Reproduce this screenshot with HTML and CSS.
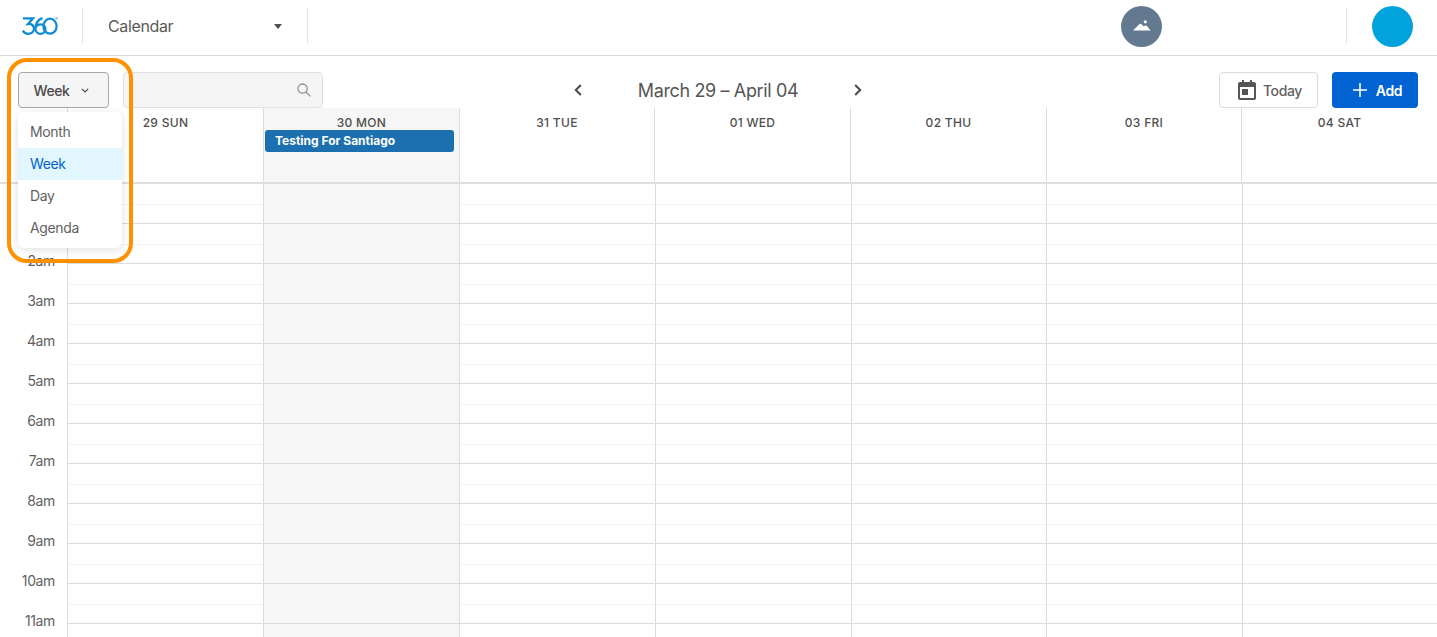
FILE: index.html
```html
<!DOCTYPE html>
<html lang="en">
<head>
<meta charset="utf-8">
<title>Calendar</title>
<link rel="stylesheet" href="styles.css">
</head>
<body>
<div class="app">
  <header class="topbar">
    <div class="logo-cell">
      <svg class="logo" width="36" height="18" viewBox="0 0 36 18" fill="none" stroke="#0f8cd6" stroke-width="2.3">
        <path d="M1 1.3H11L6 7C9.6 6.6 12 8.6 12 11.6C12 14.8 9.4 16.8 6.4 16.8C4 16.8 1.8 15.6 .8 13.6"/>
        <path d="M20.5 1.2C16 2.4 13.4 6.8 13.4 11.2C13.4 14.6 15.6 16.8 18.4 16.8C21.2 16.8 23.4 14.8 23.4 12C23.4 9.2 21.2 7.4 18.6 7.4C16.4 7.4 14.6 8.6 13.8 10.4"/>
        <ellipse cx="28" cy="9.2" rx="6.6" ry="7.5"/>
        <circle cx="34.6" cy="1.4" r=".9" stroke-width=".6"/>
      </svg>
    </div>
    <div class="app-switch">
      <span class="app-name">Calendar</span>
      <span class="caret"></span>
    </div>
    <div class="topbar-fill">
      <span class="avatar avatar-slate">
        <svg width="18" height="12" viewBox="0 0 18 12" fill="#fff"><path d="M0 10.6L6 4.4C7 3.4 7.9 3.6 8.8 4.6L10.8 6.6L11.9 5.8C12.6 5.3 13.2 5.3 13.9 5.9L17.6 10.6Z"/><circle cx="12.3" cy="1.8" r="1.6"/></svg>
      </span>
    </div>
    <div class="user-cell"><span class="avatar avatar-blue"></span></div>
  </header>

  <section class="toolbar">
    <div class="toolbar-left">
      <button class="view-btn" type="button">Week
        <svg width="8" height="5" viewBox="0 0 8 5" fill="none" stroke="#4a4a4a" stroke-width="1.2"><path d="M.8.8L4 4L7.2.8"/></svg>
      </button>
      <div class="search">
        <svg width="14" height="14" viewBox="0 0 14 14" fill="none" stroke="#8f8f8f" stroke-width="1.3"><circle cx="5.6" cy="5.6" r="4.6"/><path d="M9 9L13.4 13.4"/></svg>
      </div>
    </div>
    <div class="range">
      <svg width="8" height="12" viewBox="0 0 8 12" fill="none" stroke="#4a4a4a" stroke-width="2"><path d="M6.8 1L1.8 6L6.8 11"/></svg>
      <span class="range-label">March 29 – April 04</span>
      <svg width="8" height="12" viewBox="0 0 8 12" fill="none" stroke="#4a4a4a" stroke-width="2"><path d="M1.2 1L6.2 6L1.2 11"/></svg>
    </div>
    <div class="toolbar-right">
      <button class="today-btn" type="button">
        <svg width="18" height="20" viewBox="0 0 18 20" fill="#555" fill-rule="evenodd"><path d="M4 0H6V2H12V0H14V2H16C17.1 2 18 2.9 18 4V18C18 19.1 17.1 20 16 20H2C.9 20 0 19.1 0 18V4C0 2.9.9 2 2 2H4ZM2 7V18H16V7ZM4 9H10V15H4Z"/></svg>
        Today
      </button>
      <button class="add-btn" type="button">
        <svg width="14" height="14" viewBox="0 0 14 14" fill="none" stroke="#fff" stroke-width="1.6"><path d="M7 0V14M0 7H14"/></svg>
        Add
      </button>
    </div>
  </section>

  <section class="calendar">
    <div class="day-heads">
      <div class="gutter-head"></div>
      <div class="day-head">29 SUN</div>
      <div class="day-head day-today">30 MON
        <div class="event">Testing For Santiago</div>
      </div>
      <div class="day-head">31 TUE</div>
      <div class="day-head">01 WED</div>
      <div class="day-head">02 THU</div>
      <div class="day-head">03 FRI</div>
      <div class="day-head">04 SAT</div>
    </div>
    <div class="week-grid">
      <div class="gutter">
        <div class="hour"><span>1am</span></div>
        <div class="hour"><span>2am</span></div>
        <div class="hour"><span>3am</span></div>
        <div class="hour"><span>4am</span></div>
        <div class="hour"><span>5am</span></div>
        <div class="hour"><span>6am</span></div>
        <div class="hour"><span>7am</span></div>
        <div class="hour"><span>8am</span></div>
        <div class="hour"><span>9am</span></div>
        <div class="hour"><span>10am</span></div>
        <div class="hour"><span>11am</span></div>
      </div>
      <div class="day-col"></div>
      <div class="day-col day-col-today"></div>
      <div class="day-col"></div>
      <div class="day-col"></div>
      <div class="day-col"></div>
      <div class="day-col"></div>
      <div class="day-col"></div>
    </div>
  </section>

  <div class="view-menu">
    <div class="view-item">Month</div>
    <div class="view-item view-item-active">Week</div>
    <div class="view-item">Day</div>
    <div class="view-item">Agenda</div>
  </div>
  <div class="highlight-ring"></div>
</div>
</body>
</html>
```

FILE: styles.css
```css
* { box-sizing: border-box; }
html, body { margin: 0; height: 100%; overflow: hidden; background: #fff; }
body { font-family: Inter, "Liberation Sans", sans-serif; color: #4a4a4a; letter-spacing: -.023em; }
button { font-family: inherit; letter-spacing: inherit; cursor: pointer; }

.app { position: relative; width: 1437px; height: 637px; overflow: hidden; }

/* top bar */
.topbar { display: flex; align-items: center; height: 56px; padding-bottom: 3px; border-bottom: 1px solid #d9d9d9; }
.logo-cell { width: 83px; height: 36px; border-right: 1px solid #e6e6e6; display: flex; align-items: center; padding-left: 22px; }
.app-switch { width: 225px; height: 36px; border-right: 1px solid #e6e6e6; display: flex; align-items: center; justify-content: space-between; padding: 0 25px 0 25px; }
.app-name { font-size: 16px; color: #5a5a5a; }
.caret { width: 0; height: 0; border-left: 4px solid transparent; border-right: 4px solid transparent; border-top: 5px solid #4a4f57; }
.topbar-fill { flex: 1; display: flex; justify-content: flex-end; padding-right: 184px; }
.avatar { display: flex; align-items: center; justify-content: center; width: 41px; height: 41px; border-radius: 50%; }
.avatar-slate { background: #62798f; }
.avatar-blue { background: #02a3dc; }
.user-cell { width: 91px; height: 36px; border-left: 1px solid #e6e6e6; display: flex; align-items: center; padding-left: 25px; }

/* toolbar */
.toolbar { display: grid; grid-template-columns: 1fr auto 1fr; align-items: center; height: 52px; padding: 16px 19px 0 18px; }
.toolbar-left { display: flex; gap: 14px; }
.view-btn { display: flex; align-items: center; justify-content: center; gap: 11px; width: 91px; height: 36px; padding: 0 5px 0 0; font-size: 14px; font-weight: 500; color: #4a4a4a; background: #f5f5f5; border: 1px solid #a8a8a8; border-radius: 4px; }
.search { display: flex; align-items: center; justify-content: flex-end; width: 200px; height: 36px; padding-right: 11px; background: #f5f5f5; border: 1px solid #e0e0e0; border-radius: 4px; }
.range { display: flex; align-items: center; gap: 56px; }
.range-label { font-size: 18px; color: #555; }
.toolbar-right { display: flex; justify-content: flex-end; gap: 14px; }
.today-btn { display: flex; align-items: center; justify-content: center; gap: 7px; width: 99px; height: 36px; padding: 0 0 0 3px; font-size: 14px; font-weight: 500; color: #5f5f5f; background: #fff; border: 1px solid #dcdcdc; border-radius: 4px; }
.add-btn { display: flex; align-items: center; justify-content: center; gap: 9px; width: 86px; height: 36px; padding: 0 0 0 5px; font-size: 14px; font-weight: 600; color: #fff; background: #0063d1; border: 0; border-radius: 4px; }

/* calendar */
.day-heads, .week-grid { display: grid; }
.day-heads { grid-template-columns: 67px 196px 196px 195px 196px 196px 195px 1fr; height: 76px; border-bottom: 2px solid #dedede; }
.day-head { padding: 7px 1px 0; font-size: 12px; font-weight: 500; line-height: 16px; letter-spacing: .3px; text-align: center; color: #4f4f4f; border-left: 1px solid #dcdcdc; }
.gutter-head { background: #fff; }
.day-today { background: #f6f6f6; }
.event { height: 22px; margin: -1px 4px 0 0; padding-left: 10px; font-size: 12px; font-weight: 700; line-height: 22px; letter-spacing: 0; text-align: left; color: #fff; background: #1d70b0; border-radius: 3px; }

.week-grid { grid-template-columns: 67px 196px 196px 196px 196px 195px 196px 1fr; height: 454px; }
.hour { height: 40px; padding-right: 12px; font-size: 14px; line-height: 20px; text-align: right; color: #5f5f5f; }
.hour span { position: relative; top: 27px; display: block; }
.day-col {
  border-left: 1px solid #dcdcdc;
  background: repeating-linear-gradient(#fff 0, #fff 20px, #f2f2f2 20px, #f2f2f2 21px, #fff 21px, #fff 39px, #dcdcdc 39px, #dcdcdc 40px);
}
.day-col-today { background: repeating-linear-gradient(#f6f6f6 0, #f6f6f6 39px, #dcdcdc 39px, #dcdcdc 40px); }

/* overlays */
.view-menu { position: absolute; left: 18px; top: 112px; width: 104px; height: 136px; padding: 4px 0; background: #fff; border-radius: 6px; box-shadow: 0 2px 10px rgba(0, 0, 0, .12); }
.view-item { height: 32px; padding-left: 12px; font-size: 14px; line-height: 32px; color: #5f5f5f; }
.view-item-active { color: #0063d1; background: #e1f6fe; }
.highlight-ring { position: absolute; left: 7px; top: 58px; width: 126px; height: 205px; border: 4px solid #ff9000; border-radius: 20px; pointer-events: none; }
```
